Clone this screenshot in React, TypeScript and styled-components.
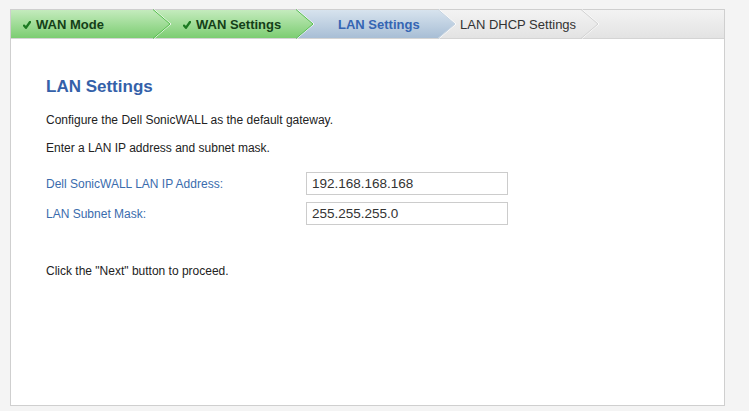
import React from "react";
import styled, { createGlobalStyle } from "styled-components";

const Global = createGlobalStyle`
  html, body { margin: 0; padding: 0; background: #f4f4f4; }
  body { font-family: "Liberation Sans", Arial, sans-serif; }
  * { box-sizing: border-box; }
`;

const Page = styled.div`
  padding: 9px 24px 5px 10px;
`;

const Panel = styled.div`
  width: 715px;
  height: 397px;
  background: #fff;
  border: 1px solid #cfcfcf;
  display: flex;
  flex-direction: column;
`;

const StepBar = styled.div`
  display: flex;
  height: 29px;
  border-bottom: 1px solid #d4d4d4;
  background: linear-gradient(#f3f3f3, #e3e3e3);
`;

type Variant = "done" | "current" | "todo";

const bg: Record<Variant, string> = {
  done: "linear-gradient(#c4ebbd, #7ccd72)",
  current: "linear-gradient(#d7e3ee, #a8bed5)",
  todo: "linear-gradient(#f3f3f3, #e3e3e3)",
};
const fg: Record<Variant, string> = {
  done: "#143f18",
  current: "#3565b3",
  todo: "#333",
};

const Step = styled.div<{ $v: Variant; $w: number; $pad: number; $z: number }>`
  position: relative;
  flex: none;
  width: ${(p) => p.$w}px;
  height: 28px;
  z-index: ${(p) => p.$z};
  display: flex;
  align-items: center;
  gap: 5px;
  padding-left: ${(p) => p.$pad}px;
  background: ${(p) => bg[p.$v]};
  color: ${(p) => fg[p.$v]};
  font-size: 13px;
  font-weight: ${(p) => (p.$v === "todo" ? 400 : 700)};
  white-space: nowrap;
`;

const Tip = styled.svg`
  position: absolute;
  left: 100%;
  top: 0;
  width: 18px;
  height: 28px;
  overflow: visible;
`;

const Check = styled.svg`
  width: 8px;
  height: 8px;
  flex: none;
  margin-top: 2px;
`;

const stops: Record<Variant, [string, string]> = {
  done: ["#c4ebbd", "#7ccd72"],
  current: ["#d7e3ee", "#a8bed5"],
  todo: ["#f3f3f3", "#e3e3e3"],
};
const edge: Record<Variant, string> = {
  done: "#55bf4c",
  current: "#c4d3e2",
  todo: "#d2d2d2",
};

function Arrow({ v, id }: { v: Variant; id: string }) {
  const [a, b] = stops[v];
  return (
    <Tip viewBox="0 0 18 28">
      <defs>
        <linearGradient id={id} x1="0" y1="0" x2="0" y2="1">
          <stop offset="0" stopColor={a} />
          <stop offset="1" stopColor={b} />
        </linearGradient>
      </defs>
      <polygon points="0,0 17,14 0,28" fill={`url(#${id})`} />
      <polyline points="1,-0.5 18,14 1,28.5" fill="none" stroke="#ffffff" strokeOpacity="0.8" strokeWidth="1" />
      <polyline points="0,-0.5 17,14 0,28.5" fill="none" stroke={edge[v]} strokeWidth="1" />
    </Tip>
  );
}

function Tick() {
  return (
    <Check viewBox="0 0 8 8">
      <path d="M1 4.6 L2.9 6.8 L7 1" fill="none" stroke="#1c7a22" strokeWidth="2.3" strokeLinecap="round" strokeLinejoin="round" />
    </Check>
  );
}

const Content = styled.div`
  padding: 38px 0 0 35px;
  display: flex;
  flex-direction: column;
`;

const Heading = styled.h2`
  margin: 0;
  font-size: 17px;
  line-height: 20px;
  font-weight: 700;
  color: #3461a9;
`;

const Para = styled.p<{ $mt: number }>`
  margin: ${(p) => p.$mt}px 0 0;
  font-size: 12px;
  line-height: 16px;
  color: #222;
`;

const Form = styled.div`
  margin-top: 16px;
  display: flex;
  flex-direction: column;
  gap: 7px;
`;

const Row = styled.div`
  display: grid;
  grid-template-columns: 260px 202px;
  align-items: center;
`;

const Label = styled.label`
  font-size: 12px;
  color: #3a6cad;
  padding-top: 1px;
`;

const Input = styled.input`
  height: 23px;
  width: 202px;
  border: 1px solid #cccccc;
  padding: 0 5px;
  font-family: "Liberation Sans", Arial, sans-serif;
  font-size: 13.5px;
  color: #333;
  background: #fff;
  outline: none;
`;

const steps: { label: string; v: Variant; w: number; pad: number; check: boolean }[] = [
  { label: "WAN Mode", v: "done", w: 142, pad: 12, check: true },
  { label: "WAN Settings", v: "done", w: 143, pad: 30, check: true },
  { label: "LAN Settings", v: "current", w: 142, pad: 42, check: false },
  { label: "LAN DHCP Settings", v: "todo", w: 143, pad: 22, check: false },
];

export default function App() {
  return (
    <Page>
      <Global />
      <Panel>
        <StepBar>
          {steps.map((s, i) => (
            <Step key={s.label} $v={s.v} $w={s.w} $pad={s.pad} $z={10 - i}>
              {s.check && <Tick />}
              <span>{s.label}</span>
              <Arrow v={s.v} id={`g${i}`} />
            </Step>
          ))}
        </StepBar>
        <Content>
          <Heading>LAN Settings</Heading>
          <Para $mt={15}>Configure the Dell SonicWALL as the default gateway.</Para>
          <Para $mt={12}>Enter a LAN IP address and subnet mask.</Para>
          <Form>
            <Row>
              <Label>Dell SonicWALL LAN IP Address:</Label>
              <Input defaultValue="192.168.168.168" />
            </Row>
            <Row>
              <Label>LAN Subnet Mask:</Label>
              <Input defaultValue="255.255.255.0" />
            </Row>
          </Form>
          <Para $mt={38}>Click the "Next" button to proceed.</Para>
        </Content>
      </Panel>
    </Page>
  );
}
